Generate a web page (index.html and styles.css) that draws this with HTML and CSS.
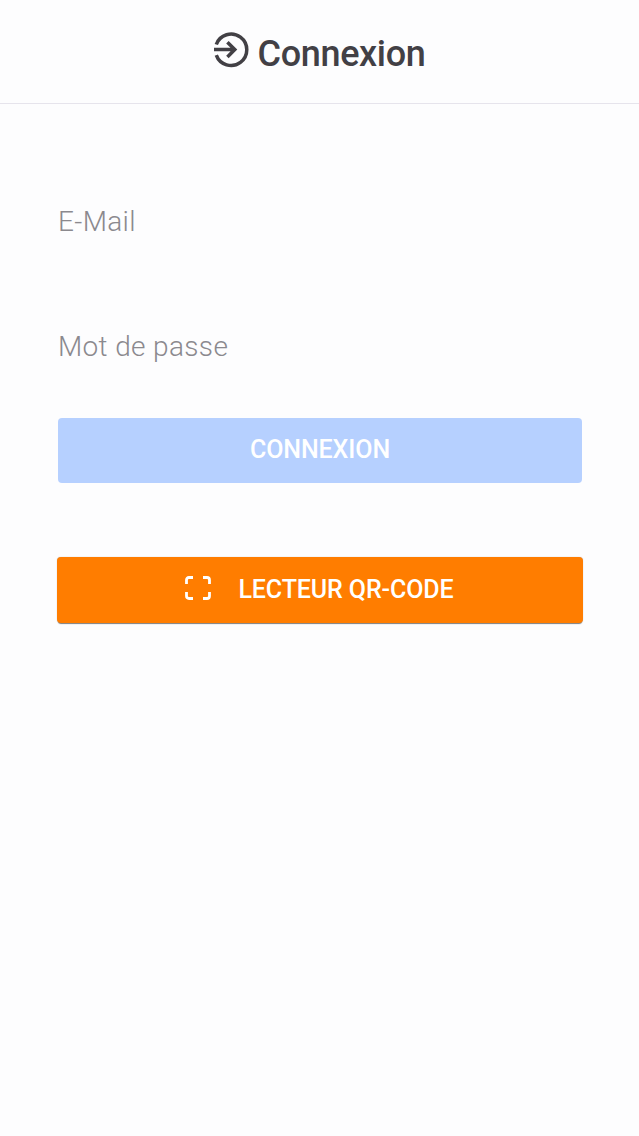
FILE: index.html
```html
<!DOCTYPE html>
<html lang="fr">
<head>
<meta charset="utf-8">
<title>Connexion</title>
<link rel="stylesheet" href="styles.css">
</head>
<body>
<header class="header">
  <svg class="header-icon" viewBox="0 0 36 36" aria-hidden="true">
    <path d="M2.3 12.5A15.7 15.7 0 1 1 2.3 23.1M0 17.6H20.5M13.4 10.2L20.8 17.6L13.4 25"/>
  </svg>
  <h1 class="title">Connexion</h1>
</header>
<main class="form">
  <input class="field" type="email" placeholder="E-Mail" aria-label="E-Mail">
  <input class="field field-password" type="password" placeholder="Mot de passe" aria-label="Mot de passe">
  <button class="button button-login" disabled><span>CONNEXION</span></button>
  <button class="button button-scan">
    <svg class="scan-icon" viewBox="0 0 26 24" aria-hidden="true">
      <path d="M1.5 8V4Q1.5 1.5 4 1.5H8M18 1.5H22Q24.5 1.5 24.5 4V8M24.5 16V20Q24.5 22.5 22 22.5H18M8 22.5H4Q1.5 22.5 1.5 20V16"/>
    </svg>
    <span>LECTEUR QR-CODE</span>
  </button>
</main>
</body>
</html>
```
FILE: styles.css
```css
* { box-sizing: border-box; }
body {
  margin: 0;
  min-height: 1136px;
  background: #fdfdfe;
  color: #424045;
  font-family: Roboto, sans-serif;
}
.header {
  display: flex;
  justify-content: center;
  height: 104px;
  padding-top: 32px;
  border-bottom: 1px solid #e6e4ec;
}
.header-icon {
  width: 36px;
  height: 36px;
  margin-right: 8px;
  fill: none;
  stroke: #424045;
  stroke-width: 3.5;
}
.title {
  margin: 0;
  font-size: 36px;
  font-weight: 500;
  line-height: 44px;
  letter-spacing: -0.35px;
}
.form {
  display: flex;
  flex-direction: column;
  padding: 87px 57px 0 58px;
}
.field {
  width: 100%;
  height: 60px;
  padding: 0;
  border: 0;
  outline: 0;
  background: transparent;
  font: 300 28px Roboto, sans-serif;
  letter-spacing: 0.35px;
}
.field::placeholder { color: #8b898e; opacity: 1; }
.field-password { margin-top: 65px; }
.button {
  display: flex;
  align-items: center;
  justify-content: center;
  border: 0;
  border-radius: 4px;
  padding: 0 0 3px;
  color: #fff;
  font: 500 25px Roboto, sans-serif;
  letter-spacing: -0.1px;
}
.button-login {
  height: 65px;
  margin-top: 42px;
  background: #b6d0ff;
}
.button-scan {
  height: 66px;
  margin: 74px -1px 0;
  padding-bottom: 2px;
  gap: 27px;
  background: #ff7d00;
  box-shadow: 0 2px 1px -1px rgba(60, 60, 60, .65), 0 0 1px rgba(60, 60, 60, .4);
}
.scan-icon {
  width: 26px;
  height: 24px;
  margin: 0 0 2px -1px;
  fill: none;
  stroke: #fff;
  stroke-width: 2.8;
}
```
